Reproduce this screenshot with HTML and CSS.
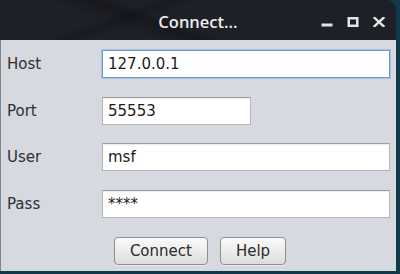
FILE: index.html
```html
<!DOCTYPE html>
<html>
<head>
<meta charset="utf-8">
<link rel="stylesheet" href="styles.css">
</head>
<body>
<div class="window">
  <div class="titlebar">
    <div></div>
    <div class="title">Connect...</div>
    <div class="controls">
      <svg class="ctl" width="12" height="10" viewBox="0 0 12 10"><rect x="0.5" y="6.5" width="11" height="3" fill="#e4e4e4"/></svg>
      <svg class="ctl" width="12" height="10" viewBox="0 0 12 10"><rect x="1.75" y="1.25" width="8.5" height="7.5" fill="none" stroke="#e4e4e4" stroke-width="2.5"/></svg>
      <svg class="ctl" width="12" height="10" viewBox="0 0 12 10"><path d="M1.5 0.8 L10.5 9.2 M10.5 0.8 L1.5 9.2" stroke="#e4e4e4" stroke-width="2.4" stroke-linecap="square"/></svg>
    </div>
  </div>
  <div class="content">
    <div class="form">
      <label class="lbl">Host</label>
      <div class="field focus">127.0.0.1</div>
      <label class="lbl">Port</label>
      <div class="field short">55553</div>
      <label class="lbl">User</label>
      <div class="field">msf</div>
      <label class="lbl">Pass</label>
      <div class="field pass">****</div>
    </div>
    <div class="buttons">
      <button class="btn">Connect</button>
      <button class="btn">Help</button>
    </div>
  </div>
</div>
</body>
</html>
```
FILE: styles.css
```css
html, body {
  margin: 0;
  padding: 0;
}
body {
  width: 400px;
  height: 274px;
  overflow: hidden;
  background: #10394a;
  font-family: "DejaVu Sans", sans-serif;
}
.window {
  width: 396px;
  height: 271px;
  display: flex;
  flex-direction: column;
  border-top-right-radius: 9px;
  overflow: hidden;
}
.titlebar {
  height: 37px;
  padding-top: 3px;
  flex: none;
  display: grid;
  grid-template-columns: 1fr auto 1fr;
  align-items: center;
  background:
    linear-gradient(160deg, transparent 0 30%, rgba(0,0,0,0.18) 34%, transparent 40%),
    linear-gradient(200deg, transparent 0 55%, rgba(0,0,0,0.22) 60%, transparent 70%),
    #1e2027;
}
.title {
  color: #ececec;
  font-family: "Open Sans", sans-serif;
  font-weight: 600;
  font-size: 16.5px;
  line-height: 20px;
}
.controls {
  justify-self: end;
  display: flex;
  gap: 14px;
  padding-right: 11px;
}
.ctl {
  display: block;
}
.content {
  flex: 1;
  background: #d6d9e0;
  border-left: 1px solid #7f868e;
  padding: 10px 6px 0 6px;
}
.form {
  display: grid;
  grid-template-columns: 95px 1fr;
  grid-auto-rows: 28px;
  row-gap: 18.5px;
  align-items: center;
}
.lbl {
  font-size: 15px;
  color: #2e3033;
}
.field {
  box-sizing: border-box;
  height: 28px;
  background: #ffffff;
  border: 1px solid #b4b4b4;
  border-top-color: #9c9c9c;
  box-shadow: inset 0 1px 1px rgba(0,0,0,0.08);
  padding-left: 5px;
  font-size: 15px;
  color: #1c1c1c;
  display: flex;
  align-items: center;
}
.field.focus {
  border-color: #6f9bcb;
  box-shadow: 0 0 0 1px #a7c2df;
}
.field.short {
  width: 149px;
}
.field.pass {
  font-size: 15px;
}
.buttons {
  display: flex;
  justify-content: center;
  gap: 12px;
  margin-top: 19px;
  padding-left: 3px;
}
.btn {
  box-sizing: border-box;
  height: 28px;
  padding: 0 15px;
  border: 1px solid #8c8f94;
  border-radius: 4px;
  background: linear-gradient(#fbfbfb, #e9e9e9 60%, #dcdcdc);
  box-shadow: 0 1px 0 rgba(255,255,255,0.5);
  font-family: "DejaVu Sans", sans-serif;
  font-size: 15px;
  color: #2b2b2b;
}
```
